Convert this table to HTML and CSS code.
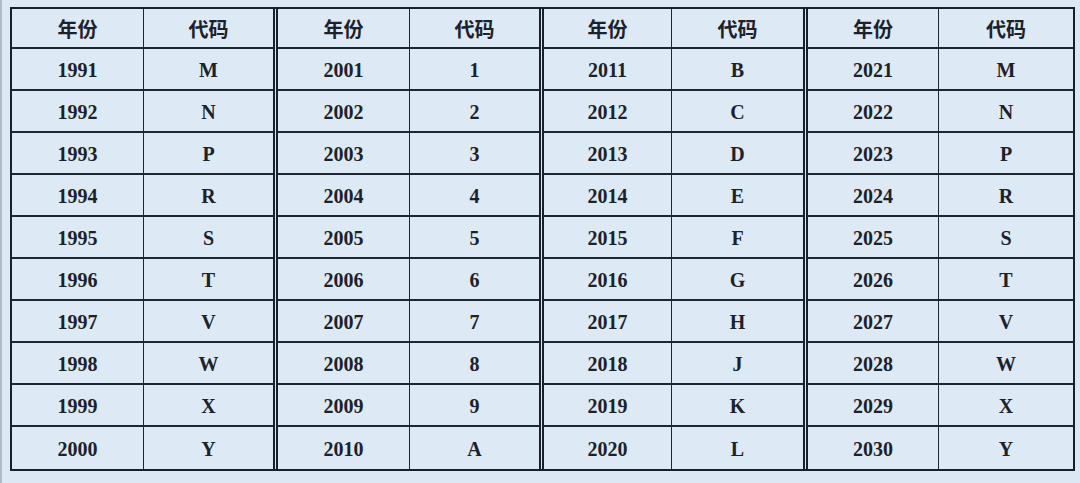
FILE: index.html
```html
<!DOCTYPE html>
<html lang="zh">
<head>
<meta charset="utf-8">
<title>年份代码表</title>
<link rel="stylesheet" href="styles.css">
</head>
<body>
<div class="sheet">
  <div class="table">
    <div class="group g1">
      <div class="cell head">年份</div><div class="cell head code">代码</div>
      <div class="cell">1991</div><div class="cell code">M</div>
      <div class="cell">1992</div><div class="cell code">N</div>
      <div class="cell">1993</div><div class="cell code">P</div>
      <div class="cell">1994</div><div class="cell code">R</div>
      <div class="cell">1995</div><div class="cell code">S</div>
      <div class="cell">1996</div><div class="cell code">T</div>
      <div class="cell">1997</div><div class="cell code">V</div>
      <div class="cell">1998</div><div class="cell code">W</div>
      <div class="cell">1999</div><div class="cell code">X</div>
      <div class="cell last">2000</div><div class="cell code last">Y</div>
    </div>
    <div class="group g2">
      <div class="cell head">年份</div><div class="cell head code">代码</div>
      <div class="cell">2001</div><div class="cell code">1</div>
      <div class="cell">2002</div><div class="cell code">2</div>
      <div class="cell">2003</div><div class="cell code">3</div>
      <div class="cell">2004</div><div class="cell code">4</div>
      <div class="cell">2005</div><div class="cell code">5</div>
      <div class="cell">2006</div><div class="cell code">6</div>
      <div class="cell">2007</div><div class="cell code">7</div>
      <div class="cell">2008</div><div class="cell code">8</div>
      <div class="cell">2009</div><div class="cell code">9</div>
      <div class="cell last">2010</div><div class="cell code last">A</div>
    </div>
    <div class="group g3">
      <div class="cell head">年份</div><div class="cell head code">代码</div>
      <div class="cell">2011</div><div class="cell code">B</div>
      <div class="cell">2012</div><div class="cell code">C</div>
      <div class="cell">2013</div><div class="cell code">D</div>
      <div class="cell">2014</div><div class="cell code">E</div>
      <div class="cell">2015</div><div class="cell code">F</div>
      <div class="cell">2016</div><div class="cell code">G</div>
      <div class="cell">2017</div><div class="cell code">H</div>
      <div class="cell">2018</div><div class="cell code">J</div>
      <div class="cell">2019</div><div class="cell code">K</div>
      <div class="cell last">2020</div><div class="cell code last">L</div>
    </div>
    <div class="group g4">
      <div class="cell head">年份</div><div class="cell head code">代码</div>
      <div class="cell">2021</div><div class="cell code">M</div>
      <div class="cell">2022</div><div class="cell code">N</div>
      <div class="cell">2023</div><div class="cell code">P</div>
      <div class="cell">2024</div><div class="cell code">R</div>
      <div class="cell">2025</div><div class="cell code">S</div>
      <div class="cell">2026</div><div class="cell code">T</div>
      <div class="cell">2027</div><div class="cell code">V</div>
      <div class="cell">2028</div><div class="cell code">W</div>
      <div class="cell">2029</div><div class="cell code">X</div>
      <div class="cell last">2030</div><div class="cell code last">Y</div>
    </div>
  </div>
</div>
</body>
</html>
```

FILE: styles.css
```css
html {
  background: #dce9f5;
}
body {
  margin: 0;
  height: 483px;
  border-left: 2px solid #aebbc8;
  box-sizing: border-box;
  background: #dce9f5;
  font-family: "Liberation Serif", "Times New Roman", serif;
  color: #1b222b;
}
.sheet {
  padding: 7px 0 0 8px;
}
.table {
  display: flex;
  width: 1065px;
  border: 2px solid #18212b;
  box-sizing: border-box;
  background: #dde9f5;
}
.group {
  display: grid;
  grid-template-rows: 40px repeat(10, 42px);
}
.g1 { grid-template-columns: 131px 130px; }
.g2 { grid-template-columns: 131px 130px; }
.g3 { grid-template-columns: 127px 132px; }
.g4 { grid-template-columns: 130px 1fr; flex: 1 1 auto; }
.group + .group {
  border-left: 5px double #18212b;
}
.cell {
  display: flex;
  align-items: center;
  justify-content: center;
  font-weight: 700;
  font-size: 20px;
  border-bottom: 2px solid #1e2731;
  box-sizing: border-box;
  padding-top: 2px;
}
.cell.code {
  border-left: 1.5px solid #1e2731;
}
.cell.last {
  border-bottom: none;
}
.head {
  font-family: "Noto Sans CJK SC", "Noto Sans", sans-serif;
  font-weight: 700;
  font-size: 20px;
  padding-top: 0;
}
```
